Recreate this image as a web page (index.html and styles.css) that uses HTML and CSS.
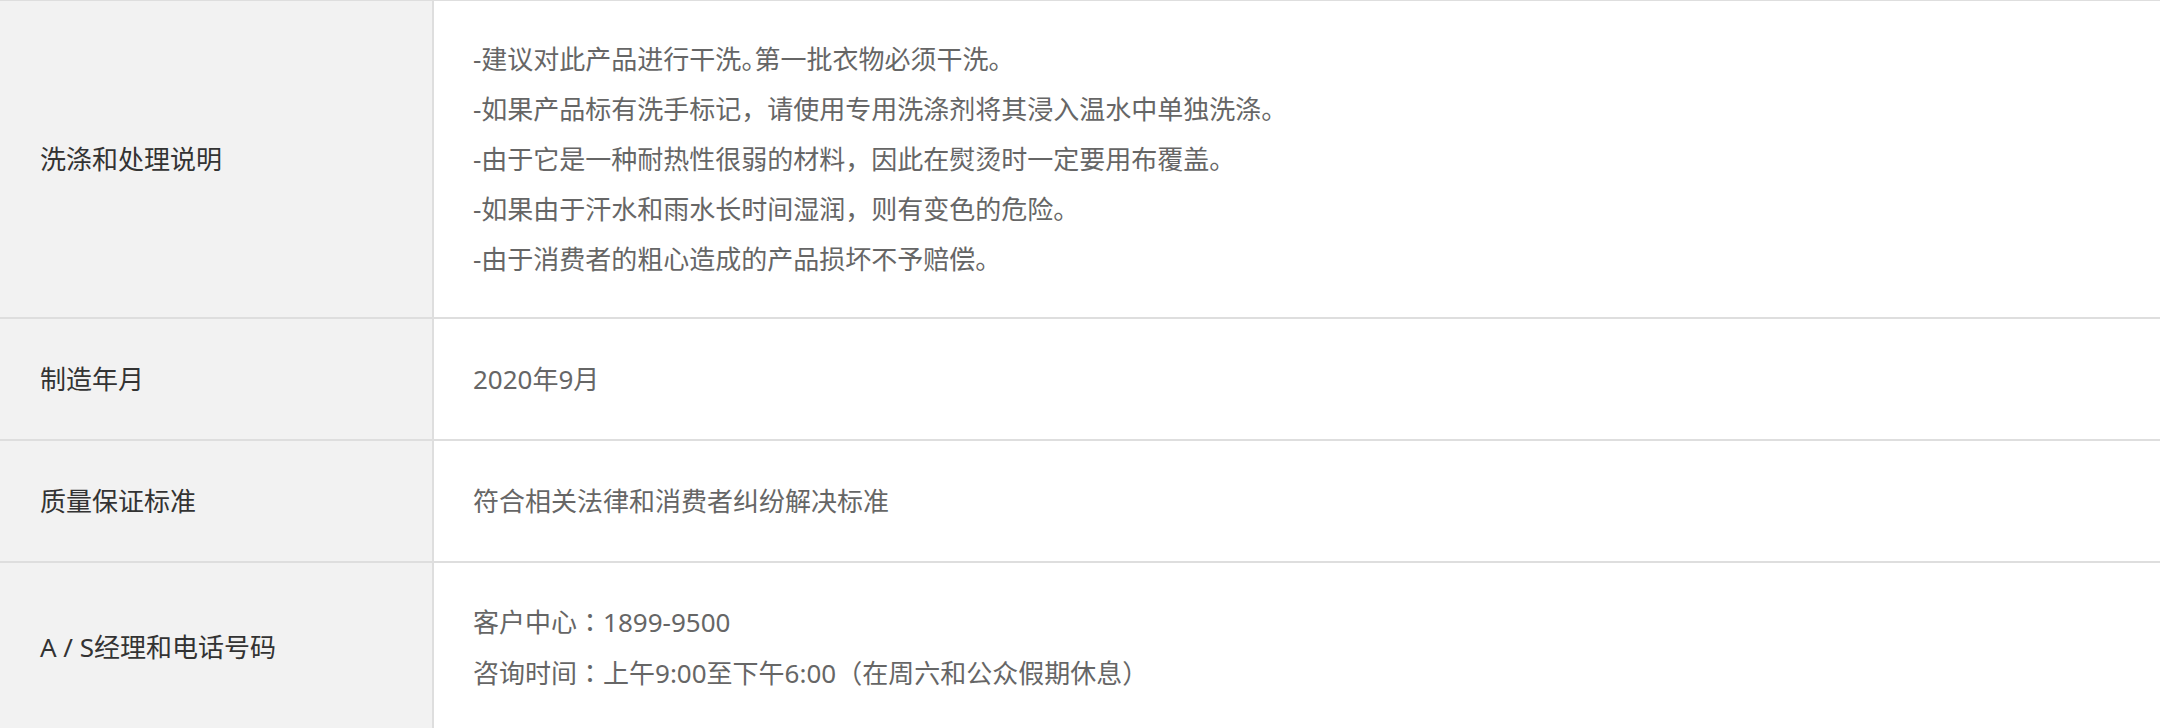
FILE: index.html
```html
<!DOCTYPE html>
<html lang="zh-CN">
<head>
<meta charset="utf-8">
<title>商品信息</title>
<link rel="stylesheet" href="styles.css">
</head>
<body>
<table class="spec">
  <tbody>
    <tr class="row row-tall">
      <th class="label">洗涤和处理说明</th>
      <td class="value">
        <p class="line">-建议对此产品进行干洗<span class="punct">。</span>第一批衣物必须干洗。</p>
        <p class="line">-如果产品标有洗手标记，请使用专用洗涤剂将其浸入温水中单独洗涤。</p>
        <p class="line">-由于它是一种耐热性很弱的材料，因此在熨烫时一定要用布覆盖。</p>
        <p class="line">-如果由于汗水和雨水长时间湿润，则有变色的危险。</p>
        <p class="line">-由于消费者的粗心造成的产品损坏不予赔偿。</p>
      </td>
    </tr>
    <tr class="row row-short">
      <th class="label">制造年月</th>
      <td class="value"><p class="line">2020年9月</p></td>
    </tr>
    <tr class="row row-short">
      <th class="label">质量保证标准</th>
      <td class="value"><p class="line">符合相关法律和消费者纠纷解决标准</p></td>
    </tr>
    <tr class="row">
      <th class="label">A / S经理和电话号码</th>
      <td class="value">
        <p class="line">客户中心<span class="colon" lang="zh-TW">：</span>1899-9500</p>
        <p class="line">咨询时间<span class="colon" lang="zh-TW">：</span>上午9:00至下午6:00（在周六和公众假期休息）</p>
      </td>
    </tr>
  </tbody>
</table>
</body>
</html>
```

FILE: styles.css
```css
html, body {
  margin: 0;
  padding: 0;
  background: #ffffff;
}

body {
  font-family: "Noto Sans", "Noto Sans CJK SC", sans-serif;
  font-size: 26px;
}

.spec {
  width: 2160px;
  border-collapse: collapse;
  border-top: 1px solid #dedede;
  table-layout: fixed;
}

.row {
  border-bottom: 2px solid #dedede;
}

.label {
  width: 392px;
  padding: 0 0 0 40px;
  background: #f2f2f2;
  border-right: 2px solid #dedede;
  text-align: left;
  font-weight: 400;
  color: #333333;
  vertical-align: middle;
  line-height: 50px;
}

.value {
  padding: 33px 0 33px 39px;
  color: #666666;
  vertical-align: middle;
  line-height: 50px;
}

.row-short .value {
  height: 54px;
}

.line {
  margin: 0;
}

.colon {
  font-family: "Noto Sans CJK TC", "Noto Sans CJK SC", sans-serif;
}

.punct {
  font-feature-settings: "halt";
}
```
